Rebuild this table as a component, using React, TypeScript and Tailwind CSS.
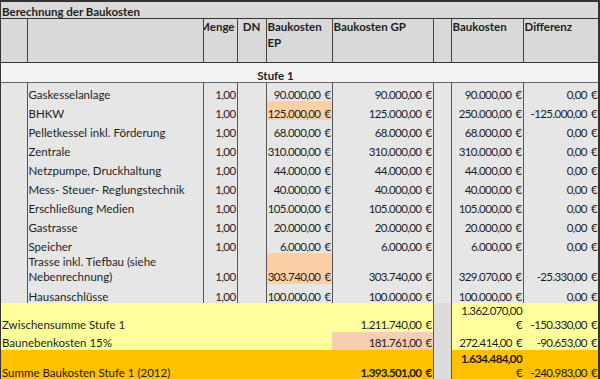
import React from "react";

type Item = {
  name: React.ReactNode;
  ep: string;
  gp: string;
  bk: string;
  diff: string;
  hi?: boolean;
  tall?: boolean;
};

const items: Item[] = [
  { name: "Gaskesselanlage", ep: "90.000,00", gp: "90.000,00", bk: "90.000,00", diff: "0,00" },
  { name: "BHKW", ep: "125.000,00", gp: "125.000,00", bk: "250.000,00", diff: "-125.000,00", hi: true },
  { name: "Pelletkessel inkl. Förderung", ep: "68.000,00", gp: "68.000,00", bk: "68.000,00", diff: "0,00" },
  { name: "Zentrale", ep: "310.000,00", gp: "310.000,00", bk: "310.000,00", diff: "0,00" },
  { name: "Netzpumpe, Druckhaltung", ep: "44.000,00", gp: "44.000,00", bk: "44.000,00", diff: "0,00" },
  { name: "Mess- Steuer- Reglungstechnik", ep: "40.000,00", gp: "40.000,00", bk: "40.000,00", diff: "0,00" },
  { name: "Erschließung Medien", ep: "105.000,00", gp: "105.000,00", bk: "105.000,00", diff: "0,00" },
  { name: "Gastrasse", ep: "20.000,00", gp: "20.000,00", bk: "20.000,00", diff: "0,00" },
  { name: "Speicher", ep: "6.000,00", gp: "6.000,00", bk: "6.000,00", diff: "0,00" },
  {
    name: (
      <>
        Trasse inkl. Tiefbau (siehe
        <br />
        Nebenrechnung)
      </>
    ),
    ep: "303.740,00",
    gp: "303.740,00",
    bk: "329.070,00",
    diff: "-25.330,00",
    hi: true,
    tall: true,
  },
  { name: "Hausanschlüsse", ep: "100.000,00", gp: "100.000,00", bk: "100.000,00", diff: "0,00" },
];

// vertical grid line used on every body cell
const cell = "p-0 align-bottom whitespace-nowrap overflow-hidden border-r border-[#555]";
const num = cell + " text-right pr-[1px] tracking-[-0.6px]";

function Eur({ v }: { v: string }) {
  return (
    <>
      {v}
      <span className="pl-[4px]">€</span>
    </>
  );
}

function DataRow({ d }: { d: Item }) {
  const lead = d.tall ? "leading-[15px]" : "leading-[13px]";
  return (
    <tr className={d.tall ? "h-[31px]" : "h-[19px]"}>
      <td className={cell}></td>
      <td className={cell + " pl-[1px] " + lead}>{d.name}</td>
      <td className={num + " " + lead}>1,00</td>
      <td className={cell}></td>
      <td className={num + " " + lead + (d.hi ? " bg-[#fcd0a6]" : "")}>
        <Eur v={d.ep} />
      </td>
      <td className={num + " " + lead}>
        <Eur v={d.gp} />
      </td>
      <td className={cell}></td>
      <td className={num + " " + lead}>
        <Eur v={d.bk} />
      </td>
      <td className={num + " " + lead + " border-r-0"}>
        <Eur v={d.diff} />
      </td>
    </tr>
  );
}

const head = "p-0 align-top leading-[16px] font-bold border-r border-[#444] overflow-hidden";
const sum = "p-0 pr-[1px] text-right align-bottom leading-[14px] tracking-[-0.6px] whitespace-nowrap";
const gap = "p-0 bg-[#dcdcdc] border-x border-[#555]";

export default function App() {
  return (
    <div className="w-[600px] h-[379px] overflow-hidden bg-[#e6e6e6] border-t-2 border-r-2 border-l border-[#333] text-[11.5px] text-[#1e1e1e] [font-family:Lato,'Liberation_Sans',sans-serif]">
      <table className="w-[597px] table-fixed border-collapse">
        <colgroup>
          <col className="w-[26px]" />
          <col className="w-[176px]" />
          <col className="w-[34px]" />
          <col className="w-[29px]" />
          <col className="w-[66px]" />
          <col className="w-[101px]" />
          <col className="w-[18px]" />
          <col className="w-[72px]" />
          <col className="w-[75px]" />
        </colgroup>
        <tbody>
          <tr className="h-[16px] bg-[#d9d9d9] border-b border-[#333]">
            <td colSpan={9} className="p-0 pl-[1px] align-bottom leading-[13px] font-bold">
              Berechnung der Baukosten
            </td>
          </tr>
          <tr className="h-[44px] bg-[#d9d9d9] border-b border-[#333]">
            <td className={head}></td>
            <td className={head}></td>
            <td className={head}>
              <div className="flex justify-end overflow-hidden whitespace-nowrap pr-[2px]">Menge</div>
            </td>
            <td className={head + " text-center"}>DN</td>
            <td className={head + " pl-[1px]"}>
              Baukosten
              <br />
              EP
            </td>
            <td className={head + " pl-[1px]"}>Baukosten GP</td>
            <td className={head}></td>
            <td className={head + " pl-[1px]"}>Baukosten</td>
            <td className={head + " pl-[1px] border-r-0"}>Differenz</td>
          </tr>
          <tr className="h-[20px] bg-[#f3f3f3] border-b border-[#666]">
            <td colSpan={9} className="p-0 pr-[48px] align-bottom leading-[13px] font-bold text-center">
              Stufe 1
            </td>
          </tr>
          {items.map((d, i) => (
            <DataRow key={i} d={d} />
          ))}
          <tr className="h-[29px] bg-[#ffff9c]">
            <td colSpan={5} className="p-0 pl-[1px] align-bottom leading-[14px] whitespace-nowrap">
              Zwischensumme Stufe 1
            </td>
            <td className={sum}>
              <Eur v="1.211.740,00" />
            </td>
            <td className={gap}></td>
            <td className={sum}>
              1.362.070,00
              <br />€
            </td>
            <td className={sum}>
              <Eur v="-150.330,00" />
            </td>
          </tr>
          <tr className="h-[18px] bg-[#ffff9c]">
            <td colSpan={5} className="p-0 pl-[1px] align-bottom leading-[14px] whitespace-nowrap">
              Baunebenkosten 15%
            </td>
            <td className={sum + " bg-[#f9cdb2]"}>
              <Eur v="181.761,00" />
            </td>
            <td className={gap}></td>
            <td className={sum}>
              <Eur v="272.414,00" />
            </td>
            <td className={sum}>
              <Eur v="-90.653,00" />
            </td>
          </tr>
          <tr className="h-[30px] bg-[#ffc000]">
            <td colSpan={5} className="p-0 pl-[1px] align-bottom leading-[14px] whitespace-nowrap">
              Summe Baukosten Stufe 1 (2012)
            </td>
            <td className={sum + " font-bold"}>
              <Eur v="1.393.501,00" />
            </td>
            <td className={gap}></td>
            <td className={sum}>
              <span className="font-bold">1.634.484,00</span>
              <br />€
            </td>
            <td className={sum}>
              <Eur v="-240.983,00" />
            </td>
          </tr>
        </tbody>
      </table>
    </div>
  );
}
